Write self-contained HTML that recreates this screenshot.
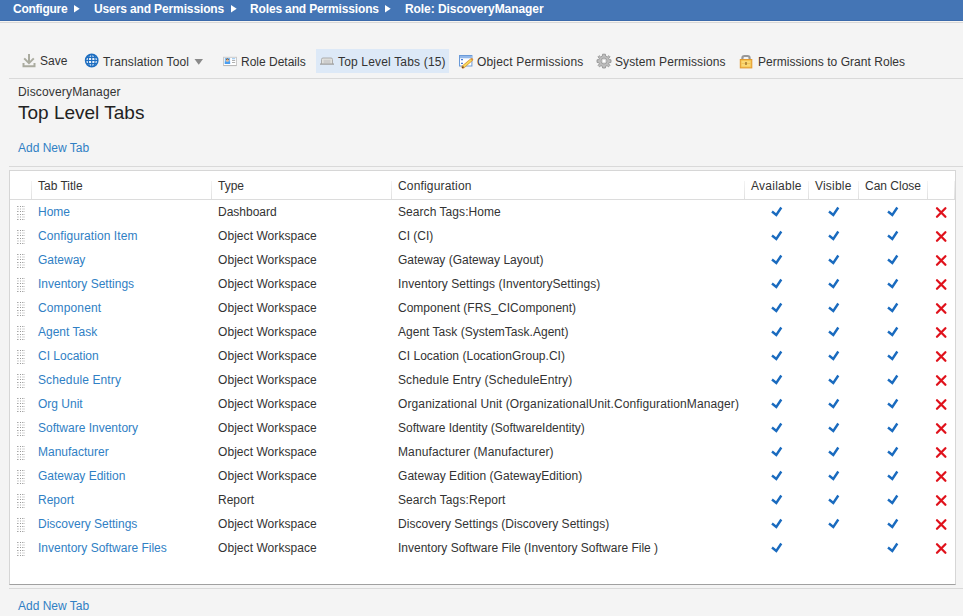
<!DOCTYPE html>
<html><head><meta charset="utf-8">
<style>
*{margin:0;padding:0;box-sizing:border-box}
html,body{width:963px;height:616px;overflow:hidden;background:#f4f4f4;font-family:"Liberation Sans",sans-serif;font-size:12px;color:#333;position:relative}
svg{position:absolute;overflow:visible}
.t{position:absolute;white-space:nowrap;line-height:14px;font-size:12px}
.bc{position:absolute;left:0;top:0;width:963px;height:20px;background:#4475b5}
.bcl{position:absolute;left:0;top:20px;width:963px;height:1px;background:#3b6aab}
.bcw{position:absolute;left:0;top:21px;width:963px;height:1px;background:#f8f5f1}
.bcg{position:absolute;left:0;top:22px;width:963px;height:1px;background:#d8d8d8}
.bt{color:#fff;font-weight:bold}
.tri{position:absolute;width:0;height:0;border-top:3px solid transparent;border-bottom:3px solid transparent;border-left:5px solid #fff}
.hl{position:absolute;left:316px;top:49px;width:133px;height:24px;background:#dde9f7}
.line{position:absolute;height:1px;background:#d9d9d9}
.link{color:#3080c4}
.box{position:absolute;left:9px;top:170px;width:947px;height:415px;background:#fff;border:1px solid #d6d6d6;border-bottom-color:#a0a0a0}
.sep{position:absolute;top:181px;width:1px;height:18px;background:linear-gradient(#f4f4f4,#e0e0e0)}
.hb{position:absolute;left:10px;top:199px;width:945px;height:1px;background:#dcdcdc}
</style></head><body>
<svg width="0" height="0" style="position:absolute">
<defs>
<g id="chk"><path d="M2 5.5 L6.3 9 L11.3 1.5" fill="none" stroke="#1a6bbf" stroke-width="2.4"/></g>
<g id="grip"><rect x="0" y="0" width="1" height="1" fill="#a6a6a6"/><rect x="1" y="0" width="1" height="1" fill="#d0d0d0"/><rect x="3" y="0" width="1" height="1" fill="#999"/><rect x="5" y="0" width="1" height="1" fill="#a8a8a8"/><rect x="6" y="0" width="2" height="1" fill="#d8d8d8"/><rect x="0" y="5" width="1" height="1" fill="#a6a6a6"/><rect x="1" y="5" width="1" height="1" fill="#d0d0d0"/><rect x="3" y="5" width="1" height="1" fill="#999"/><rect x="5" y="5" width="1" height="1" fill="#a8a8a8"/><rect x="6" y="5" width="2" height="1" fill="#d8d8d8"/><rect x="0" y="8" width="1" height="1" fill="#a6a6a6"/><rect x="1" y="8" width="1" height="1" fill="#d0d0d0"/><rect x="3" y="8" width="1" height="1" fill="#999"/><rect x="5" y="8" width="1" height="1" fill="#a8a8a8"/><rect x="6" y="8" width="2" height="1" fill="#d8d8d8"/><rect x="0" y="13" width="1" height="1" fill="#a6a6a6"/><rect x="1" y="13" width="1" height="1" fill="#d0d0d0"/><rect x="3" y="13" width="1" height="1" fill="#999"/><rect x="5" y="13" width="1" height="1" fill="#a8a8a8"/><rect x="6" y="13" width="2" height="1" fill="#d8d8d8"/><rect x="0" y="2" width="2" height="2" fill="#e6e6e6"/><rect x="3" y="2" width="1" height="2" fill="#d4d4d4"/><rect x="5" y="2" width="3" height="2" fill="#eaeaea"/><rect x="0" y="10" width="2" height="2" fill="#e6e6e6"/><rect x="3" y="10" width="1" height="2" fill="#d4d4d4"/><rect x="5" y="10" width="3" height="2" fill="#eaeaea"/></g>
<g id="xx"><path d="M3 2.2 L11.4 10.7 M11.4 2.2 L3 10.7" fill="none" stroke="#e0121c" stroke-width="2.3" stroke-linecap="round"/></g>
</defs>
</svg>
<div class="bc"></div><div class="bcl"></div><div class="bcw"></div><div class="bcg"></div>
<div class="t bt" style="left:13px;top:2px;letter-spacing:-0.25px">Configure</div>
<svg style="left:74px;top:5px" width="7" height="8"><path d="M0 0 L5.7 3.75 L0 7.5 Z" fill="#fff"/></svg>
<div class="t bt" style="left:94px;top:2px;letter-spacing:-0.125px">Users and Permissions</div>
<svg style="left:231px;top:5px" width="7" height="8"><path d="M0 0 L5.7 3.75 L0 7.5 Z" fill="#fff"/></svg>
<div class="t bt" style="left:250px;top:2px;letter-spacing:-0.15px">Roles and Permissions</div>
<svg style="left:385px;top:5px" width="7" height="8"><path d="M0 0 L5.7 3.75 L0 7.5 Z" fill="#fff"/></svg>
<div class="t bt" style="left:405px;top:2px;letter-spacing:-0.07px">Role: DiscoveryManager</div>

<div class="hl"></div>
<!-- save icon -->
<svg style="left:22px;top:53px" width="14" height="15"><path d="M7 1 V10 M2.2 5.4 L7 10.2 L11.8 5.4 M1.5 10 V13.2 H12.5 V10" fill="none" stroke="#aaab9f" stroke-width="2"/></svg>
<div class="t" style="left:40px;top:54px">Save</div>
<!-- globe -->
<svg style="left:84px;top:53px" width="16" height="16"><defs><clipPath id="gc"><circle cx="7.7" cy="7.5" r="6"/></clipPath></defs>
<circle cx="7.7" cy="7.5" r="6.1" fill="#e8f0fa" stroke="#1e6ec0" stroke-width="1.6"/>
<g clip-path="url(#gc)" stroke="#1e6ec0" stroke-width="1.2" fill="none"><path d="M0 7.5 H16 M7.7 0 V16 M0 4.3 H16 M0 10.7 H16"/><ellipse cx="7.7" cy="7.5" rx="3.4" ry="7"/></g></svg>
<div class="t" style="left:103px;top:55px;letter-spacing:0.13px">Translation Tool</div>
<svg style="left:194px;top:58px" width="10" height="8"><path d="M0.5 1 H9 L4.75 6.7 Z" fill="#8a8a8a"/></svg>
<!-- id card -->
<svg style="left:222px;top:56px" width="16" height="11"><rect x="1.5" y="1.3" width="13" height="8.2" fill="#fff" stroke="#cacaca"/><path d="M1.5 9.6 H14.5" stroke="#b8b8b8"/><rect x="2.8" y="2" width="5.3" height="6" fill="#7cbcf4"/><rect x="2.8" y="5.5" width="5.3" height="2.5" fill="#4a9ef0"/><circle cx="5.4" cy="4.4" r="1.4" fill="#e8b890"/><path d="M4 3.6 Q5.4 2 6.8 3.6" stroke="#7a5030" stroke-width="1" fill="none"/><path d="M10 2.7 H13.2" stroke="#9ccaf2" stroke-width="1.2"/><path d="M10 4.5 H13.2 M10 6.5 H13.2" stroke="#a8a8a8" stroke-width="0.9"/></svg>
<div class="t" style="left:241px;top:55px">Role Details</div>
<!-- tab icon -->
<svg style="left:319px;top:56px" width="16" height="10"><path d="M2.5 8 V3.5 Q2.5 2 4 2 H12 Q13.5 2 13.5 3.5 V8" fill="#e2e2de" stroke="#acacac"/><rect x="4.5" y="3.8" width="7" height="3.4" fill="#cdcdcd"/><path d="M1 8.1 H15" stroke="#a4a4a4" stroke-width="1.4"/></svg>
<div class="t" style="left:338px;top:55px;letter-spacing:0.17px">Top Level Tabs (15)</div>
<!-- object perms -->
<svg style="left:458px;top:54px" width="16" height="15"><rect x="1.5" y="1.5" width="12.4" height="10.5" fill="#fff" stroke="#6a9ad8"/><rect x="2" y="2" width="11.4" height="2.3" fill="#93b8ea"/><path d="M3 5.6 H5 M3 9.4 H5" stroke="#4a7ad0" stroke-width="1.1"/><path d="M5 13 L13.6 5.6" stroke="#d8903c" stroke-width="3.2" stroke-linecap="round"/><path d="M5.3 12.7 L13.3 5.9" stroke="#f6dc5c" stroke-width="1.8"/><path d="M4.3 13.8 L5.5 12.6" stroke="#5a3a1a" stroke-width="1.3"/></svg>
<div class="t" style="left:477px;top:55px;letter-spacing:0.17px">Object Permissions</div>
<!-- gear -->
<svg style="left:596px;top:54px" width="16" height="15"><g transform="translate(8 7)"><g fill="#bdbdbd" stroke="#8e8e8e" stroke-width="0.8"><path d="M-1.4 -6.8 H1.4 L1.7 -4.8 L3.3 -4.1 L4.9 -5.3 L6 -4.2 L4.7 -2.6 L5.2 -1.4 L7 -1.2 V1.4 L5.2 1.6 L4.7 2.8 L5.9 4.4 L4.5 5.8 L3 4.6 L1.7 5.2 L1.4 7 H-1.4 L-1.7 5.2 L-3 4.6 L-4.5 5.8 L-5.9 4.4 L-4.7 2.8 L-5.2 1.6 L-7 1.4 V-1.2 L-5.2 -1.4 L-4.7 -2.6 L-6 -4.2 L-4.9 -5.3 L-3.3 -4.1 L-1.7 -4.8 Z"/></g><circle r="3" fill="#d4d4d4" stroke="#9a9a9a" stroke-width="0.8"/><circle r="1.5" fill="#fff"/></g></svg>
<div class="t" style="left:615px;top:55px;letter-spacing:0.11px">System Permissions</div>
<!-- lock -->
<svg style="left:738px;top:54px" width="16" height="15"><path d="M4.4 6 V4 Q4.4 2 6.5 2 H9.5 Q11.6 2 11.6 4 V6" fill="none" stroke="#989898" stroke-width="2.2"/><rect x="2.3" y="5.5" width="11.5" height="8.4" fill="#f3c04c" stroke="#e39a2c"/><rect x="3.5" y="6.8" width="9" height="5.8" fill="#fad874"/><path d="M3.5 9.5 H12.5" stroke="#f0c050" stroke-width="0.8"/><path d="M8 8 V11" stroke="#8a6020" stroke-width="1.2"/></svg>
<div class="t" style="left:758px;top:55px;letter-spacing:0.04px">Permissions to Grant Roles</div>
<div class="line" style="left:9px;top:78px;width:954px"></div>

<div class="t" style="left:18px;top:85px;letter-spacing:0.17px">DiscoveryManager</div>
<div class="t" style="left:18px;top:102px;font-size:19px;line-height:22px;color:#222">Top Level Tabs</div>
<div class="t link" style="left:18px;top:141px">Add New Tab</div>
<div class="line" style="left:9px;top:166px;width:954px"></div>

<div class="box"></div>
<div class="sep" style="left:31px"></div>
<div class="sep" style="left:211px"></div>
<div class="sep" style="left:391px"></div>
<div class="sep" style="left:744px"></div>
<div class="sep" style="left:808px"></div>
<div class="sep" style="left:858px"></div>
<div class="sep" style="left:927px"></div>
<div class="sep" style="left:954px"></div>
<div class="hb"></div>
<div class="t" style="left:38px;top:179px">Tab Title</div>
<div class="t" style="left:218px;top:179px">Type</div>
<div class="t" style="left:398px;top:179px;letter-spacing:0.17px">Configuration</div>
<div class="t" style="left:751px;top:179px;letter-spacing:0.25px">Available</div>
<div class="t" style="left:815px;top:179px;letter-spacing:0.2px">Visible</div>
<div class="t" style="left:865px;top:179px">Can Close</div>

<svg style="left:17px;top:206px" width="8" height="14"><use href="#grip"/></svg>
<div class="t link" style="left:38px;top:205px">Home</div>
<div class="t" style="left:218px;top:205px">Dashboard</div>
<div class="t" style="left:398px;top:205px;letter-spacing:0.06px">Search Tags:Home</div>
<svg class="ck" style="left:770px;top:206px" width="13" height="11"><use href="#chk"/></svg>
<svg class="ck" style="left:827px;top:206px" width="13" height="11"><use href="#chk"/></svg>
<svg class="ck" style="left:886px;top:206px" width="13" height="11"><use href="#chk"/></svg>
<svg class="ck" style="left:934px;top:206px" width="14" height="14"><use href="#xx"/></svg>
<svg style="left:17px;top:230px" width="8" height="14"><use href="#grip"/></svg>
<div class="t link" style="left:38px;top:229px;letter-spacing:0.08px">Configuration Item</div>
<div class="t" style="left:218px;top:229px;letter-spacing:0.06px">Object Workspace</div>
<div class="t" style="left:398px;top:229px">CI (CI)</div>
<svg class="ck" style="left:770px;top:230px" width="13" height="11"><use href="#chk"/></svg>
<svg class="ck" style="left:827px;top:230px" width="13" height="11"><use href="#chk"/></svg>
<svg class="ck" style="left:886px;top:230px" width="13" height="11"><use href="#chk"/></svg>
<svg class="ck" style="left:934px;top:230px" width="14" height="14"><use href="#xx"/></svg>
<svg style="left:17px;top:254px" width="8" height="14"><use href="#grip"/></svg>
<div class="t link" style="left:38px;top:253px">Gateway</div>
<div class="t" style="left:218px;top:253px;letter-spacing:0.06px">Object Workspace</div>
<div class="t" style="left:398px;top:253px">Gateway (Gateway Layout)</div>
<svg class="ck" style="left:770px;top:254px" width="13" height="11"><use href="#chk"/></svg>
<svg class="ck" style="left:827px;top:254px" width="13" height="11"><use href="#chk"/></svg>
<svg class="ck" style="left:886px;top:254px" width="13" height="11"><use href="#chk"/></svg>
<svg class="ck" style="left:934px;top:254px" width="14" height="14"><use href="#xx"/></svg>
<svg style="left:17px;top:278px" width="8" height="14"><use href="#grip"/></svg>
<div class="t link" style="left:38px;top:277px">Inventory Settings</div>
<div class="t" style="left:218px;top:277px;letter-spacing:0.06px">Object Workspace</div>
<div class="t" style="left:398px;top:277px;letter-spacing:0.06px">Inventory Settings (InventorySettings)</div>
<svg class="ck" style="left:770px;top:278px" width="13" height="11"><use href="#chk"/></svg>
<svg class="ck" style="left:827px;top:278px" width="13" height="11"><use href="#chk"/></svg>
<svg class="ck" style="left:886px;top:278px" width="13" height="11"><use href="#chk"/></svg>
<svg class="ck" style="left:934px;top:278px" width="14" height="14"><use href="#xx"/></svg>
<svg style="left:17px;top:302px" width="8" height="14"><use href="#grip"/></svg>
<div class="t link" style="left:38px;top:301px;letter-spacing:0.13px">Component</div>
<div class="t" style="left:218px;top:301px;letter-spacing:0.06px">Object Workspace</div>
<div class="t" style="left:398px;top:301px">Component (FRS_CIComponent)</div>
<svg class="ck" style="left:770px;top:302px" width="13" height="11"><use href="#chk"/></svg>
<svg class="ck" style="left:827px;top:302px" width="13" height="11"><use href="#chk"/></svg>
<svg class="ck" style="left:886px;top:302px" width="13" height="11"><use href="#chk"/></svg>
<svg class="ck" style="left:934px;top:302px" width="14" height="14"><use href="#xx"/></svg>
<svg style="left:17px;top:326px" width="8" height="14"><use href="#grip"/></svg>
<div class="t link" style="left:38px;top:325px">Agent Task</div>
<div class="t" style="left:218px;top:325px;letter-spacing:0.06px">Object Workspace</div>
<div class="t" style="left:398px;top:325px;letter-spacing:0.02px">Agent Task (SystemTask.Agent)</div>
<svg class="ck" style="left:770px;top:326px" width="13" height="11"><use href="#chk"/></svg>
<svg class="ck" style="left:827px;top:326px" width="13" height="11"><use href="#chk"/></svg>
<svg class="ck" style="left:886px;top:326px" width="13" height="11"><use href="#chk"/></svg>
<svg class="ck" style="left:934px;top:326px" width="14" height="14"><use href="#xx"/></svg>
<svg style="left:17px;top:350px" width="8" height="14"><use href="#grip"/></svg>
<div class="t link" style="left:38px;top:349px">CI Location</div>
<div class="t" style="left:218px;top:349px;letter-spacing:0.06px">Object Workspace</div>
<div class="t" style="left:398px;top:349px;letter-spacing:0.03px">CI Location (LocationGroup.CI)</div>
<svg class="ck" style="left:770px;top:350px" width="13" height="11"><use href="#chk"/></svg>
<svg class="ck" style="left:827px;top:350px" width="13" height="11"><use href="#chk"/></svg>
<svg class="ck" style="left:886px;top:350px" width="13" height="11"><use href="#chk"/></svg>
<svg class="ck" style="left:934px;top:350px" width="14" height="14"><use href="#xx"/></svg>
<svg style="left:17px;top:374px" width="8" height="14"><use href="#grip"/></svg>
<div class="t link" style="left:38px;top:373px;letter-spacing:0.12px">Schedule Entry</div>
<div class="t" style="left:218px;top:373px;letter-spacing:0.06px">Object Workspace</div>
<div class="t" style="left:398px;top:373px;letter-spacing:0.117px">Schedule Entry (ScheduleEntry)</div>
<svg class="ck" style="left:770px;top:374px" width="13" height="11"><use href="#chk"/></svg>
<svg class="ck" style="left:827px;top:374px" width="13" height="11"><use href="#chk"/></svg>
<svg class="ck" style="left:886px;top:374px" width="13" height="11"><use href="#chk"/></svg>
<svg class="ck" style="left:934px;top:374px" width="14" height="14"><use href="#xx"/></svg>
<svg style="left:17px;top:398px" width="8" height="14"><use href="#grip"/></svg>
<div class="t link" style="left:38px;top:397px">Org Unit</div>
<div class="t" style="left:218px;top:397px;letter-spacing:0.06px">Object Workspace</div>
<div class="t" style="left:398px;top:397px;letter-spacing:0.113px">Organizational Unit (OrganizationalUnit.ConfigurationManager)</div>
<svg class="ck" style="left:770px;top:398px" width="13" height="11"><use href="#chk"/></svg>
<svg class="ck" style="left:827px;top:398px" width="13" height="11"><use href="#chk"/></svg>
<svg class="ck" style="left:886px;top:398px" width="13" height="11"><use href="#chk"/></svg>
<svg class="ck" style="left:934px;top:398px" width="14" height="14"><use href="#xx"/></svg>
<svg style="left:17px;top:422px" width="8" height="14"><use href="#grip"/></svg>
<div class="t link" style="left:38px;top:421px">Software Inventory</div>
<div class="t" style="left:218px;top:421px;letter-spacing:0.06px">Object Workspace</div>
<div class="t" style="left:398px;top:421px">Software Identity (SoftwareIdentity)</div>
<svg class="ck" style="left:770px;top:422px" width="13" height="11"><use href="#chk"/></svg>
<svg class="ck" style="left:827px;top:422px" width="13" height="11"><use href="#chk"/></svg>
<svg class="ck" style="left:886px;top:422px" width="13" height="11"><use href="#chk"/></svg>
<svg class="ck" style="left:934px;top:422px" width="14" height="14"><use href="#xx"/></svg>
<svg style="left:17px;top:446px" width="8" height="14"><use href="#grip"/></svg>
<div class="t link" style="left:38px;top:445px">Manufacturer</div>
<div class="t" style="left:218px;top:445px;letter-spacing:0.06px">Object Workspace</div>
<div class="t" style="left:398px;top:445px;letter-spacing:0.108px">Manufacturer (Manufacturer)</div>
<svg class="ck" style="left:770px;top:446px" width="13" height="11"><use href="#chk"/></svg>
<svg class="ck" style="left:827px;top:446px" width="13" height="11"><use href="#chk"/></svg>
<svg class="ck" style="left:886px;top:446px" width="13" height="11"><use href="#chk"/></svg>
<svg class="ck" style="left:934px;top:446px" width="14" height="14"><use href="#xx"/></svg>
<svg style="left:17px;top:470px" width="8" height="14"><use href="#grip"/></svg>
<div class="t link" style="left:38px;top:469px">Gateway Edition</div>
<div class="t" style="left:218px;top:469px;letter-spacing:0.06px">Object Workspace</div>
<div class="t" style="left:398px;top:469px;letter-spacing:0.05px">Gateway Edition (GatewayEdition)</div>
<svg class="ck" style="left:770px;top:470px" width="13" height="11"><use href="#chk"/></svg>
<svg class="ck" style="left:827px;top:470px" width="13" height="11"><use href="#chk"/></svg>
<svg class="ck" style="left:886px;top:470px" width="13" height="11"><use href="#chk"/></svg>
<svg class="ck" style="left:934px;top:470px" width="14" height="14"><use href="#xx"/></svg>
<svg style="left:17px;top:494px" width="8" height="14"><use href="#grip"/></svg>
<div class="t link" style="left:38px;top:493px">Report</div>
<div class="t" style="left:218px;top:493px">Report</div>
<div class="t" style="left:398px;top:493px;letter-spacing:0.09px">Search Tags:Report</div>
<svg class="ck" style="left:770px;top:494px" width="13" height="11"><use href="#chk"/></svg>
<svg class="ck" style="left:827px;top:494px" width="13" height="11"><use href="#chk"/></svg>
<svg class="ck" style="left:886px;top:494px" width="13" height="11"><use href="#chk"/></svg>
<svg class="ck" style="left:934px;top:494px" width="14" height="14"><use href="#xx"/></svg>
<svg style="left:17px;top:518px" width="8" height="14"><use href="#grip"/></svg>
<div class="t link" style="left:38px;top:517px">Discovery Settings</div>
<div class="t" style="left:218px;top:517px;letter-spacing:0.06px">Object Workspace</div>
<div class="t" style="left:398px;top:517px;letter-spacing:0.03px">Discovery Settings (Discovery Settings)</div>
<svg class="ck" style="left:770px;top:518px" width="13" height="11"><use href="#chk"/></svg>
<svg class="ck" style="left:827px;top:518px" width="13" height="11"><use href="#chk"/></svg>
<svg class="ck" style="left:886px;top:518px" width="13" height="11"><use href="#chk"/></svg>
<svg class="ck" style="left:934px;top:518px" width="14" height="14"><use href="#xx"/></svg>
<svg style="left:17px;top:542px" width="8" height="14"><use href="#grip"/></svg>
<div class="t link" style="left:38px;top:541px">Inventory Software Files</div>
<div class="t" style="left:218px;top:541px;letter-spacing:0.06px">Object Workspace</div>
<div class="t" style="left:398px;top:541px">Inventory Software File (Inventory Software File )</div>
<svg class="ck" style="left:770px;top:542px" width="13" height="11"><use href="#chk"/></svg>
<svg class="ck" style="left:886px;top:542px" width="13" height="11"><use href="#chk"/></svg>
<svg class="ck" style="left:934px;top:542px" width="14" height="14"><use href="#xx"/></svg>

<div class="line" style="left:9px;top:588px;width:954px"></div>
<div class="t link" style="left:18px;top:599px">Add New Tab</div>
</body></html>
